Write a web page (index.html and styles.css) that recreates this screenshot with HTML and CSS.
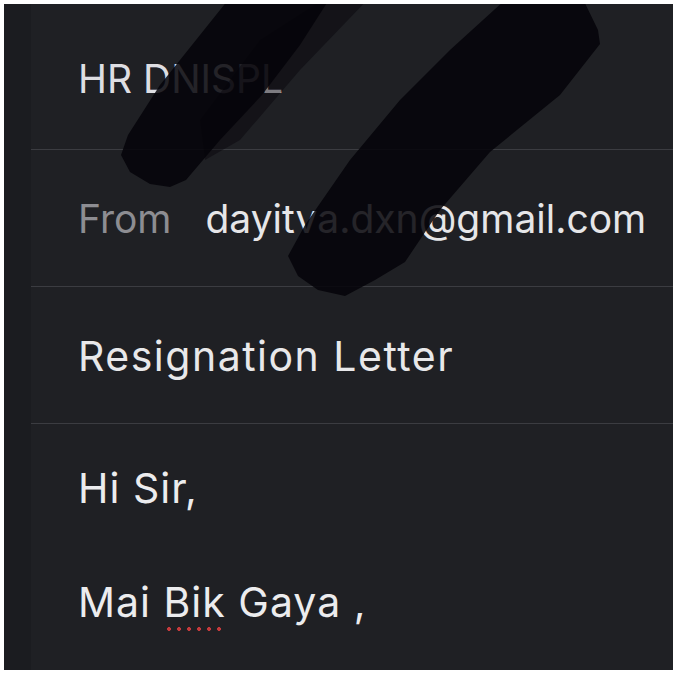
FILE: index.html
```html
<!DOCTYPE html>
<html lang="en">
<head>
<meta charset="utf-8">
<title>Compose</title>
<link rel="stylesheet" href="styles.css">
</head>
<body>
<div class="frame">
  <aside class="strip"></aside>
  <main class="compose">
    <div class="row row-first"><span class="to">HR DNISPL</span></div>
    <div class="row"><span class="label">From</span><span class="email">dayitva.dxn@gmail.com</span></div>
    <div class="row"><span class="subject">Resignation Letter</span></div>
    <div class="body">
      <p class="line">Hi Sir,</p>
      <p class="line">Mai <span class="typo">Bik</span> Gaya ,</p>
    </div>
  </main>
  <svg class="scribble" viewBox="4 4 669 666" preserveAspectRatio="none" aria-hidden="true">
    <polygon class="ink-light" points="330,-5 372,-5 300,70 240,140 205,160 200,120 260,40"/>
    <polygon class="ink" points="232,-5 332,-5 300,45 262,95 220,140 186,180 170,187 150,184 130,172 121,155 128,135 160,85 200,35"/>
    <polygon class="ink" points="505,0 582,-3 598,30 600,44 560,95 490,152 440,210 405,262 375,280 345,296 318,290 298,276 288,256 305,225 350,160 400,100 450,50"/>
  </svg>
</div>
</body>
</html>
```

FILE: styles.css
```css
html, body {
  margin: 0;
  padding: 0;
  background: #ffffff;
}

body {
  padding: 4px 2px 5px 4px;
  font-family: "Inter", "Liberation Sans", sans-serif;
}

.frame {
  position: relative;
  display: flex;
  height: 666px;
  background: #1f2024;
  overflow: hidden;
}

.strip {
  width: 27px;
  flex: none;
  background: #1b1c20;
}

.compose {
  flex: 1;
  display: flex;
  flex-direction: column;
}

.row {
  display: flex;
  align-items: center;
  height: 136px;
  padding-left: 47px;
  border-bottom: 1px solid #3b3c41;
  font-size: 39px;
  color: #e4e4e6;
  white-space: nowrap;
}

.row-first {
  height: 146px;
  padding-top: 3px;
  box-sizing: border-box;
}

.to {
  color: #dedee2;
}

.label {
  color: #8d8d92;
  margin-right: 34px;
}

.email {
  color: #e6e6e8;
}

.subject {
  color: #e8e8ea;
  font-size: 41px;
  letter-spacing: 1.5px;
  padding-top: 2px;
}

.body {
  padding: 7px 0 0 47px;
}

.line {
  margin: 0;
  font-size: 41px;
  letter-spacing: 1px;
  line-height: 114px;
  color: #ececee;
  white-space: nowrap;
}

.typo {
  position: relative;
}

.typo::after {
  content: "";
  position: absolute;
  left: 0;
  right: 2px;
  bottom: -4px;
  height: 4px;
  background: radial-gradient(circle, #c43a3c 1.6px, transparent 2.2px) 0 0 / 10px 4px repeat-x;
}

.scribble {
  position: absolute;
  inset: 0;
  width: 100%;
  height: 100%;
  pointer-events: none;
}

.ink {
  fill: #050309;
  opacity: 0.86;
}

.ink-light {
  fill: #07050b;
  opacity: 0.45;
}
```
